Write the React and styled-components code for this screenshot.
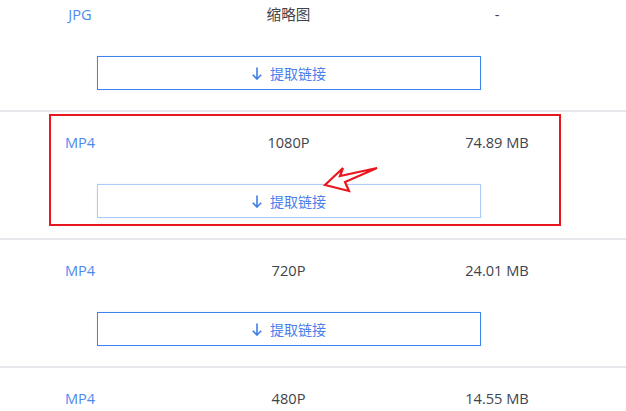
import styled, { createGlobalStyle } from "styled-components";

const GlobalStyle = createGlobalStyle`
  html, body {
    margin: 0;
    padding: 0;
    background: #ffffff;
    overflow: hidden;
  }
  body {
    font-family: "Open Sans", "Noto Sans CJK SC", sans-serif;
  }
`;

const Page = styled.div`
  position: relative;
  width: 626px;
  height: 411px;
  overflow: hidden;
`;

const List = styled.div`
  margin-top: -16px;
  margin-left: -24px;
  width: 650px;
  display: flex;
  flex-direction: column;
`;

const Row = styled.div`
  display: flex;
  flex-direction: column;
  align-items: stretch;
  padding: 20px 0 20px;
  border-bottom: 2px solid #e7e7eb;
`;

const Cells = styled.div`
  display: grid;
  grid-template-columns: 208px 209px 208px;
  height: 20px;
  line-height: 20px;
  font-size: 14.6px;
`;

const Cell = styled.div`
  text-align: center;
  color: ${(p) => (p.$accent ? "#4d8af0" : "#3f444c")};
`;

const ButtonWrap = styled.div`
  display: flex;
  margin-top: 32px;
  padding-left: 121px;
`;

const Button = styled.button`
  width: 384px;
  height: 34px;
  display: flex;
  align-items: center;
  justify-content: center;
  gap: 8px;
  background: #ffffff;
  border: 1px solid ${(p) => (p.$light ? "#a9cdfa" : "#3f83f2")};
  box-shadow: 0 0 2px rgba(120, 140, 170, 0.18);
  color: #4a80ea;
  font-family: "Noto Sans CJK SC", sans-serif;
  font-size: 14px;
  padding: 0;
  cursor: pointer;
`;

const Highlight = styled.div`
  position: absolute;
  left: 49px;
  top: 114px;
  width: 512px;
  height: 112px;
  box-sizing: border-box;
  border: 2px solid #e8161e;
  pointer-events: none;
`;

const Pointer = styled.svg`
  position: absolute;
  left: 318px;
  top: 160px;
  pointer-events: none;
`;

const DownArrow = () => (
  <svg width="10" height="13" viewBox="0 0 10 13" fill="none">
    <path d="M5 0.5V12M0.8 7.8L5 12L9.2 7.8" stroke="#3f7ee8" strokeWidth="1.6" />
  </svg>
);

const rows = [
  { type: "JPG", quality: "缩略图", size: "-" },
  { type: "MP4", quality: "1080P", size: "74.89 MB", active: true },
  { type: "MP4", quality: "720P", size: "24.01 MB" },
  { type: "MP4", quality: "480P", size: "14.55 MB" },
];

export default function App() {
  return (
    <>
      <GlobalStyle />
      <Page>
        <List>
          {rows.map((r, i) => (
            <Row key={i}>
              <Cells>
                <Cell $accent>{r.type}</Cell>
                <Cell>{r.quality}</Cell>
                <Cell>{r.size}</Cell>
              </Cells>
              <ButtonWrap>
                <Button $light={r.active}>
                  <DownArrow />
                  提取链接
                </Button>
              </ButtonWrap>
            </Row>
          ))}
        </List>
        <Highlight />
        <Pointer width="66" height="36" viewBox="0 0 66 36">
          <path
            d="M7 25 L25 8 L22 16 L59 8 L27 22 L31 31 Z"
            fill="#ffffff"
            stroke="#e8161e"
            strokeWidth="2.2"
            strokeLinejoin="miter"
          />
        </Pointer>
      </Page>
    </>
  );
}
